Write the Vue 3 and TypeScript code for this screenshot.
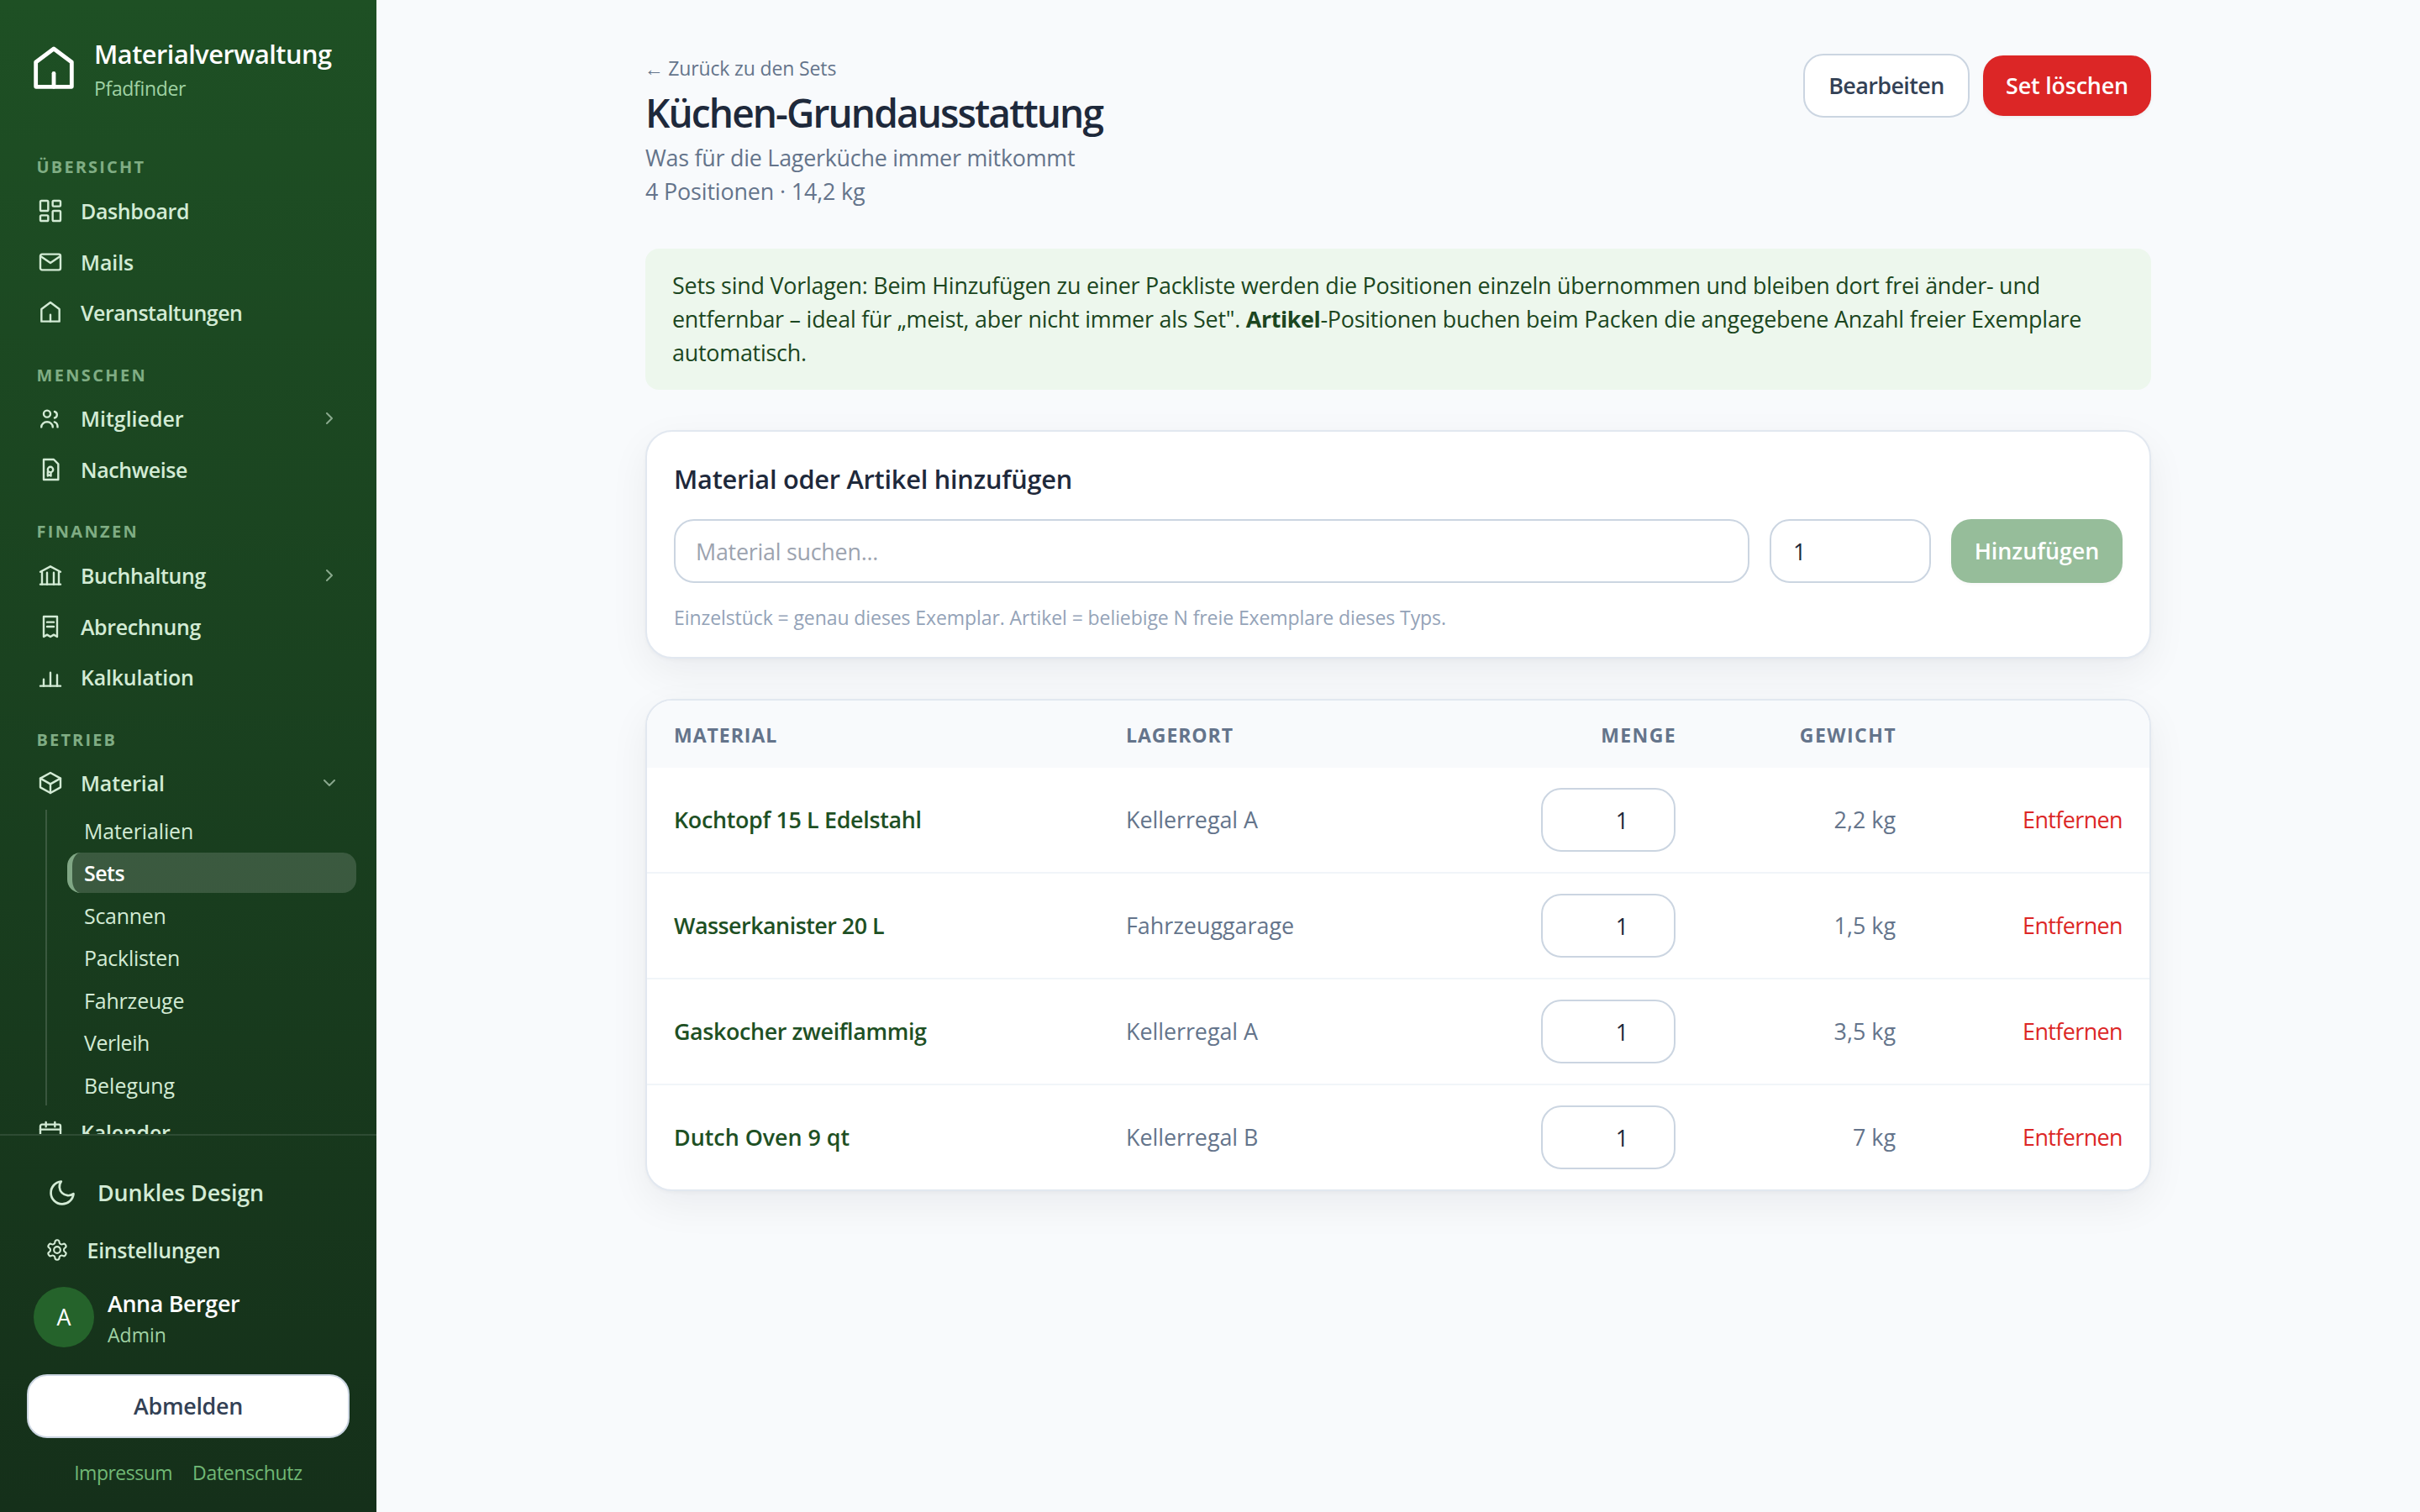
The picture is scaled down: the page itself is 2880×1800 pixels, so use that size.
<script setup lang="ts">
import { ref } from 'vue'

interface NavItem {
  label: string
  icon: string[]
  tracking: string
  chevron?: 'right' | 'down'
  children?: SubItem[]
}
interface SubItem {
  label: string
  tracking: string
  active?: boolean
}
interface NavSection {
  title: string
  tracking: string
  items: NavItem[]
}
interface Position {
  name: string
  tracking: string
  place: string
  placeTracking: string
  amount: string
  weight: string
}

const house = ['M4 9l8-6 8 6v11H4z', 'M12 20v-6']

const sections: NavSection[] = [
  {
    title: 'Übersicht',
    tracking: '0.11em',
    items: [
      {
        label: 'Dashboard',
        tracking: '-0.0139em',
        icon: [
          'M4 3h5a1 1 0 0 1 1 1v7a1 1 0 0 1-1 1H4a1 1 0 0 1-1-1V4a1 1 0 0 1 1-1z',
          'M15 3h5a1 1 0 0 1 1 1v3a1 1 0 0 1-1 1h-5a1 1 0 0 1-1-1V4a1 1 0 0 1 1-1z',
          'M15 12h5a1 1 0 0 1 1 1v7a1 1 0 0 1-1 1h-5a1 1 0 0 1-1-1v-7a1 1 0 0 1 1-1z',
          'M4 16h5a1 1 0 0 1 1 1v3a1 1 0 0 1-1 1H4a1 1 0 0 1-1-1v-3a1 1 0 0 1 1-1z',
        ],
      },
      {
        label: 'Mails',
        tracking: '-0.0038em',
        icon: [
          'M4.5 5h15A1.5 1.5 0 0 1 21 6.500v11a1.500 1.500 0 0 1-1.500 1.500h-15A1.500 1.500 0 0 1 3 17.500v-11A1.500 1.500 0 0 1 4.500 5z',
          'M3.500 7l8.500 5.800L20.500 7',
        ],
      },
      { label: 'Veranstaltungen', tracking: '-0.0207em', icon: house },
    ],
  },
  {
    title: 'Menschen',
    tracking: '0.119em',
    items: [
      {
        label: 'Mitglieder',
        tracking: '0',
        chevron: 'right',
        icon: [
          'M12 8a3 3 0 1 1-6 0 3 3 0 0 1 6 0z',
          'M3.900 19.800a5.100 4.600 0 0 1 10.200 0',
          'M15.700 6a2.900 2.900 0 0 1 0 5.600',
          'M15.600 15.300c1.800.5 2.800 2 2.800 4.500',
        ],
      },
      {
        label: 'Nachweise',
        tracking: '-0.0155em',
        icon: [
          'M6 3h9l4 4v14H6z',
          'M14.400 12a2.400 2.400 0 1 1-4.800 0 2.400 2.400 0 0 1 4.800 0z',
          'M9.600 13.800v3.900l1.400-.9 1.400.9v-3.100',
        ],
      },
    ],
  },
  {
    title: 'Finanzen',
    tracking: '0.118em',
    items: [
      {
        label: 'Buchhaltung',
        tracking: '-0.0156em',
        chevron: 'right',
        icon: ['M3 8.800L12 4l9 4.800', 'M3 20h18', 'M4.500 9v11M9 9.500V20M15 9.500V20M19.500 9v11'],
      },
      {
        label: 'Abrechnung',
        tracking: '-0.0155em',
        icon: ['M6 3h12v18l-3-1.800-3 1.800-3-1.800L6 21z', 'M9 8h6M9 12h6'],
      },
      {
        label: 'Kalkulation',
        tracking: '-0.008em',
        icon: ['M3 20h18', 'M6 20v-6M12 20V8M18 20V10'],
      },
    ],
  },
  {
    title: 'Betrieb',
    tracking: '0.108em',
    items: [
      {
        label: 'Material',
        tracking: '-0.0052em',
        chevron: 'down',
        icon: ['M12 3l9 5v8l-9 5-9-5V8z', 'M3 8l9 5 9-5', 'M12 13v8'],
        children: [
          { label: 'Materialien', tracking: '-0.0048em' },
          { label: 'Sets', tracking: '-0.0196em', active: true },
          { label: 'Scannen', tracking: '-0.0108em' },
          { label: 'Packlisten', tracking: '-0.0104em' },
          { label: 'Fahrzeuge', tracking: '-0.0065em' },
          { label: 'Verleih', tracking: '-0.018em' },
          { label: 'Belegung', tracking: '-0.0006em' },
        ],
      },
      {
        label: 'Kalender',
        tracking: '-0.008em',
        icon: ['M4.500 5h15A1.500 1.500 0 0 1 21 6.500V21H3V6.500A1.500 1.500 0 0 1 4.500 5z', 'M3 9.500h18', 'M8 3v4M16 3v4'],
      },
    ],
  },
]

const chevrons = { right: 'M9 6l6 6-6 6', down: 'M6 9l6 6 6-6' }

const search = ref('')
const count = ref('1')
const positions = ref<Position[]>([
  { name: 'Kochtopf 15 L Edelstahl', tracking: '-0.0125em', place: 'Kellerregal A', placeTracking: '-0.0017em', amount: '1', weight: '2,2 kg' },
  { name: 'Wasserkanister 20 L', tracking: '-0.0192em', place: 'Fahrzeuggarage', placeTracking: '0', amount: '1', weight: '1,5 kg' },
  { name: 'Gaskocher zweiflammig', tracking: '-0.0145em', place: 'Kellerregal A', placeTracking: '-0.0017em', amount: '1', weight: '3,5 kg' },
  { name: 'Dutch Oven 9 qt', tracking: '-0.001em', place: 'Kellerregal B', placeTracking: '-0.0017em', amount: '1', weight: '7 kg' },
])
</script>

<template>
  <div class="app">
    <aside class="sidebar">
      <header class="brand">
        <svg class="brand-icon" viewBox="0 0 24 24"><path v-for="d in house" :key="d" :d="d" /></svg>
        <div class="brand-text">
          <span class="brand-name">Materialverwaltung</span>
          <span class="brand-sub">Pfadfinder</span>
        </div>
      </header>

      <nav class="nav">
        <section v-for="section in sections" :key="section.title" class="nav-section">
          <h2 class="nav-title" :style="{ letterSpacing: section.tracking }">{{ section.title }}</h2>
          <template v-for="item in section.items" :key="item.label">
            <a class="nav-item">
              <svg class="nav-icon" viewBox="0 0 24 24"><path v-for="d in item.icon" :key="d" :d="d" /></svg>
              <span class="nav-label" :style="{ letterSpacing: item.tracking }">{{ item.label }}</span>
              <svg v-if="item.chevron" class="chevron" viewBox="0 0 24 24"><path :d="chevrons[item.chevron]" /></svg>
            </a>
            <div v-if="item.children" class="sub-nav">
              <a
                v-for="child in item.children"
                :key="child.label"
                class="sub-item"
                :class="{ active: child.active }"
                :style="{ letterSpacing: child.tracking }"
              >{{ child.label }}</a>
            </div>
          </template>
        </section>
      </nav>

      <footer class="side-footer">
        <a class="theme">
          <svg class="theme-icon" viewBox="0 0 24 24"><path d="M21 12.790A9 9 0 1 1 11.210 3 7 7 0 0 0 21 12.790z" /></svg>
          <span>Dunkles Design</span>
        </a>
        <a class="settings">
          <svg class="nav-icon" viewBox="-1.700 -1.700 27.400 27.400">
            <path d="M12.220 2h-.44a2 2 0 0 0-2 2v.18a2 2 0 0 1-1 1.730l-.43.25a2 2 0 0 1-2 0l-.15-.08a2 2 0 0 0-2.730.73l-.22.38a2 2 0 0 0 .73 2.730l.15.1a2 2 0 0 1 1 1.720v.51a2 2 0 0 1-1 1.740l-.15.09a2 2 0 0 0-.73 2.730l.22.38a2 2 0 0 0 2.730.73l.15-.08a2 2 0 0 1 2 0l.43.25a2 2 0 0 1 1 1.730V20a2 2 0 0 0 2 2h.44a2 2 0 0 0 2-2v-.18a2 2 0 0 1 1-1.730l.43-.25a2 2 0 0 1 2 0l.15.08a2 2 0 0 0 2.730-.73l.22-.39a2 2 0 0 0-.73-2.730l-.15-.08a2 2 0 0 1-1-1.740v-.5a2 2 0 0 1 1-1.740l.15-.09a2 2 0 0 0 .73-2.730l-.22-.38a2 2 0 0 0-2.730-.73l-.15.08a2 2 0 0 1-2 0l-.43-.25a2 2 0 0 1-1-1.730V4a2 2 0 0 0-2-2z" />
            <circle cx="12" cy="12" r="3.300" />
          </svg>
          <span>Einstellungen</span>
        </a>
        <div class="user">
          <div class="avatar">A</div>
          <div class="user-text">
            <span class="user-name">Anna Berger</span>
            <span class="user-role">Admin</span>
          </div>
        </div>
        <button class="logout">Abmelden</button>
        <div class="legal">
          <a class="imprint">Impressum</a>
          <a class="privacy">Datenschutz</a>
        </div>
      </footer>
    </aside>

    <main class="main">
      <div class="content">
        <div class="page-head">
          <div class="head-text">
            <a class="back">← Zurück zu den Sets</a>
            <h1>Küchen-Grundausstattung</h1>
            <p class="desc">Was für die Lagerküche immer mitkommt</p>
            <p class="meta">4 Positionen · 14,2 kg</p>
          </div>
          <div class="actions">
            <button class="btn btn-edit">Bearbeiten</button>
            <button class="btn btn-delete">Set löschen</button>
          </div>
        </div>

        <div class="notice">
          Sets sind Vorlagen: Beim Hinzufügen zu einer Packliste werden die Positionen einzeln übernommen und bleiben dort frei änder- und entfernbar – ideal für „meist, aber nicht immer als Set". <strong>Artikel</strong>-Positionen buchen beim Packen die angegebene Anzahl freier Exemplare automatisch.
        </div>

        <section class="card add-card">
          <h3>Material oder Artikel hinzufügen</h3>
          <div class="add-row">
            <input v-model="search" class="field search" placeholder="Material suchen..." />
            <input v-model="count" class="field count" />
            <button class="btn btn-add">Hinzufügen</button>
          </div>
          <p class="hint">Einzelstück = genau dieses Exemplar. Artikel = beliebige N freie Exemplare dieses Typs.</p>
        </section>

        <section class="card table-card">
          <div class="row row-head">
            <span class="h-material">Material</span>
            <span class="h-place">Lagerort</span>
            <span class="h-amount">Menge</span>
            <span class="h-weight">Gewicht</span>
            <span></span>
          </div>
          <div v-for="p in positions" :key="p.name" class="row row-body">
            <a class="name" :style="{ letterSpacing: p.tracking }">{{ p.name }}</a>
            <span class="place" :style="{ letterSpacing: p.placeTracking }">{{ p.place }}</span>
            <input v-model="p.amount" class="field amount" />
            <span class="weight">{{ p.weight }}</span>
            <a class="remove">Entfernen</a>
          </div>
        </section>
      </div>
    </main>
  </div>
</template>

<style>
body {
  background: #f8fafc;
}
</style>

<style scoped>
* {
  box-sizing: border-box;
}
.app {
  display: flex;
  width: 100%;
  height: 1800px;
  overflow: hidden;
  font-family: "Open Sans", "Noto Sans", sans-serif;
  font-size: 26.88px;
  line-height: 40px;
  color: #1e293b;
}
h1,
h2,
h3,
p {
  margin: 0;
}
svg {
  display: block;
  flex: none;
  fill: none;
  stroke: currentColor;
  stroke-width: 1.8;
  stroke-linecap: round;
  stroke-linejoin: round;
}
button,
input {
  font: inherit;
  margin: 0;
}

/* Sidebar */
.sidebar {
  display: flex;
  flex-direction: column;
  flex: none;
  width: 448px;
  height: 100%;
  background: linear-gradient(180deg, #1e5024 0%, #15301a 100%);
  color: #d3ebd5;
}
.brand {
  display: flex;
  flex: none;
  gap: 16px;
  height: 155.5px;
  padding: 44px 32px 0;
  color: #fff;
}
.brand-icon {
  width: 64px;
  height: 64px;
  margin-top: 6px;
}
.brand-text {
  display: flex;
  flex-direction: column;
}
.brand-name {
  font-size: 30.72px;
  font-weight: 600;
  line-height: 40px;
  letter-spacing: -0.0155em;
}
.brand-sub {
  margin-top: 5px;
  font-size: 23.04px;
  line-height: 32px;
  letter-spacing: -0.0154em;
  color: #a0d2a4;
}
.nav {
  flex: 1;
  min-height: 0;
  overflow: hidden;
}
.nav-section {
  padding-top: 31.8px;
}
.nav-title {
  margin: 0 0 9.2px;
  padding-left: 43.5px;
  font-size: 19.97px;
  font-weight: 700;
  line-height: 24px;
  text-transform: uppercase;
  color: #80ad84;
}
.nav-item {
  display: flex;
  align-items: center;
  height: 60.8px;
  padding: 0 44px;
}
.nav-icon {
  width: 32px;
  height: 32px;
}
.nav-label {
  flex: 1;
  padding-left: 20px;
  font-size: 24.96px;
  font-weight: 600;
}
.chevron {
  width: 24px;
  height: 24px;
  stroke-width: 2;
  opacity: 0.6;
}
.sub-nav {
  display: flex;
  flex-direction: column;
  gap: 2.5px;
  margin: 1px 24px 1.6px 54px;
  padding: 1px 0 0 24px;
  border-left: 2px solid rgba(255, 255, 255, 0.15);
}
.sub-item {
  height: 48px;
  padding-left: 14px;
  border-left: 6px solid transparent;
  border-radius: 16px;
  font-size: 24.96px;
  line-height: 48px;
}
.sub-item.active {
  border-left-color: #80a785;
  background: rgba(255, 255, 255, 0.15);
  font-weight: 600;
  color: #fff;
}
.side-footer {
  display: flex;
  flex: none;
  flex-direction: column;
  height: 450px;
  padding: 0 32px;
  border-top: 2px solid rgba(255, 255, 255, 0.1);
}
.theme {
  display: flex;
  align-items: center;
  gap: 24px;
  height: 40px;
  margin-top: 48px;
  padding-left: 24px;
  font-weight: 600;
  letter-spacing: -0.0055em;
}
.theme-icon {
  width: 36px;
  height: 36px;
}
.settings {
  display: flex;
  align-items: center;
  gap: 19.5px;
  height: 40px;
  margin-top: 28px;
  padding-left: 20px;
  font-size: 24.96px;
  font-weight: 600;
  letter-spacing: -0.012em;
}
.user {
  display: flex;
  gap: 16px;
  height: 72px;
  margin-top: 24px;
  padding-left: 8px;
}
.avatar {
  width: 72px;
  height: 72px;
  border-radius: 50%;
  background: #25632b;
  line-height: 72px;
  text-align: center;
  color: #fff;
}
.user-text {
  display: flex;
  flex-direction: column;
}
.user-name {
  font-weight: 600;
  line-height: 40px;
  letter-spacing: -0.0136em;
  color: #fff;
}
.user-role {
  font-size: 23.04px;
  line-height: 34px;
  color: #a0d2a4;
}
.logout {
  height: 76px;
  margin-top: 32px;
  padding: 0;
  border: 2px solid #cbd5e1;
  border-radius: 24px;
  background: #fff;
  font-weight: 600;
  letter-spacing: -0.012em;
  color: #334155;
}
.legal {
  display: flex;
  justify-content: center;
  gap: 24px;
  margin-top: 25px;
  font-size: 23.04px;
  line-height: 32px;
  color: #70b875;
}
.imprint {
  letter-spacing: -0.023em;
}
.privacy {
  letter-spacing: -0.013em;
}

/* Main column */
.main {
  flex: 1;
  padding-top: 64px;
  background: #f8fafc;
}
.content {
  width: 1792px;
  margin: 0 auto;
}
.page-head {
  display: flex;
  justify-content: space-between;
  height: 184px;
  margin-bottom: 48px;
}
.head-text {
  display: flex;
  flex-direction: column;
  padding-top: 1px;
  color: #64748b;
}
.back {
  margin-left: -1.5px;
  font-size: 23.04px;
  line-height: 32px;
  letter-spacing: -0.0065em;
}
h1 {
  margin: 8px 0 3px;
  font-size: 46.08px;
  font-weight: 600;
  line-height: 60px;
  letter-spacing: -0.0418em;
  color: #1e293b;
}
.desc {
  letter-spacing: -0.0092em;
}
.meta {
  letter-spacing: -0.0054em;
}
.actions {
  display: flex;
  align-items: center;
  gap: 16px;
  height: 76px;
}
.btn {
  padding: 0;
  border: 0;
  border-radius: 24px;
  font-weight: 600;
  color: #fff;
}
.btn-edit {
  width: 198px;
  height: 76px;
  border: 2px solid #cbd5e1;
  background: #fff;
  letter-spacing: -0.0215em;
  color: #334155;
}
.btn-delete {
  width: 200px;
  height: 72px;
  background: #dc2626;
  box-shadow: 0 2px 4px rgba(0, 0, 0, 0.05);
  letter-spacing: -0.0065em;
}
.notice {
  height: 168px;
  margin-bottom: 48px;
  padding: 24px 32px;
  border-radius: 16px;
  background: #edf7ed;
  letter-spacing: -0.0084em;
  color: #1b4620;
}
.notice strong {
  font-weight: 700;
  letter-spacing: -0.015em;
}
.card {
  margin-bottom: 48px;
  border: 2px solid #e2e8f0;
  border-radius: 32px;
  background: #fff;
  box-shadow:
    0 2px 4px rgba(15, 23, 42, 0.03),
    0 16px 48px rgba(15, 23, 42, 0.06);
}
.add-card {
  height: 272px;
  padding: 36px 32px 0;
}
h3 {
  font-size: 30.72px;
  font-weight: 600;
  line-height: 40px;
  letter-spacing: -0.008em;
}
.add-row {
  display: flex;
  gap: 24px;
  margin-top: 28px;
}
.field {
  width: 100%;
  height: 76px;
  padding: 0 26px;
  border: 2px solid #cbd5e1;
  border-radius: 24px;
  outline: none;
  background: #fff;
  color: #1e293b;
}
.field::placeholder {
  color: #9ca3af;
  opacity: 1;
}
.search {
  flex: 1;
  min-width: 0;
  padding-left: 24px;
  letter-spacing: -0.0095em;
}
.count {
  flex: none;
  width: 192px;
}
.btn-add {
  flex: none;
  width: 204px;
  height: 76px;
  background: #96bd9a;
  box-shadow: 0 2px 4px rgba(0, 0, 0, 0.03);
  letter-spacing: -0.001em;
}
.hint {
  margin-top: 25px;
  font-size: 23.04px;
  line-height: 32px;
  letter-spacing: -0.0043em;
  color: #94a3b8;
}

/* Positions table */
.table-card {
  overflow: hidden;
}
.row {
  display: grid;
  grid-template-columns: 538px 494px 160px 262px 270px;
  align-items: center;
  padding: 0 32px;
}
.row-head {
  height: 80px;
  padding-top: 1px;
  background: #f8fafc;
  font-size: 23.04px;
  font-weight: 700;
  text-transform: uppercase;
  color: #64748b;
}
.h-material {
  letter-spacing: 0.0415em;
}
.h-place {
  letter-spacing: 0.0405em;
}
.h-amount {
  margin-right: -1px;
  text-align: right;
  letter-spacing: 0.06em;
}
.h-weight {
  margin-right: -1px;
  text-align: right;
  letter-spacing: 0.0625em;
}
.row-body {
  height: 126px;
  border-bottom: 2px solid #f1f5f9;
}
.row-body:last-child {
  height: 124px;
  border-bottom: 0;
}
.name {
  font-weight: 600;
  color: #1e5024;
}
.place,
.weight {
  color: #64748b;
}
.amount {
  padding: 0 54px 0 0;
  text-align: right;
}
.weight {
  text-align: right;
}
.remove {
  text-align: right;
  letter-spacing: -0.0215em;
  color: #dc2626;
}
</style>
